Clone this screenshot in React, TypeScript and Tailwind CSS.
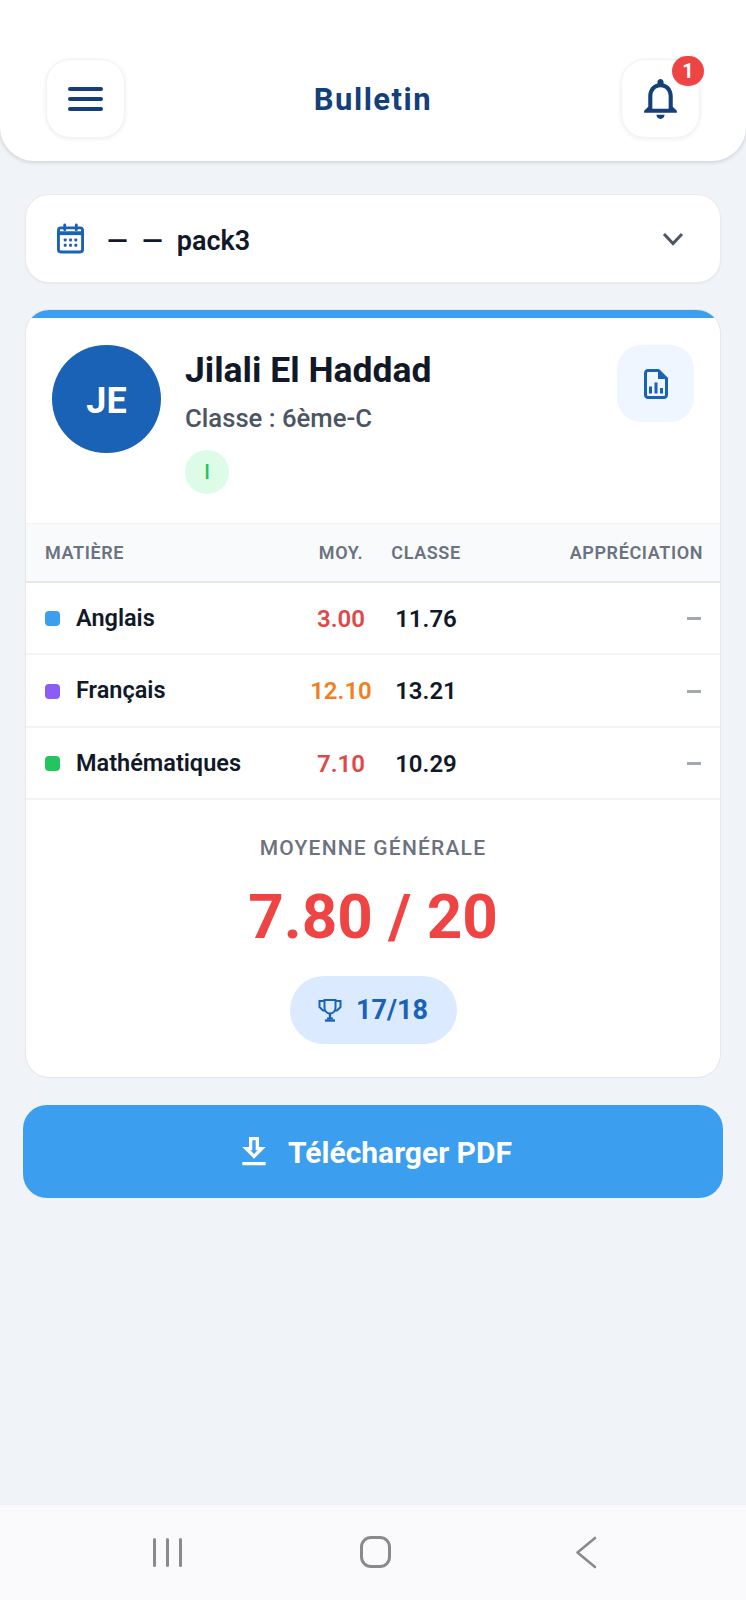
const subjects = [
  { name: "Anglais", dot: "bg-[#3b9eef]", moy: "3.00", moyColor: "text-[#e04848]", classe: "11.76", height: "h-[72px]" },
  { name: "Français", dot: "bg-[#8b5cf6]", moy: "12.10", moyColor: "text-[#f07f22]", classe: "13.21", height: "h-[73px]" },
  { name: "Mathématiques", dot: "bg-[#22c55e]", moy: "7.10", moyColor: "text-[#e04848]", classe: "10.29", height: "h-[72px]" },
];

const gridCols = "grid grid-cols-[265px_62px_108px_1fr] items-center pl-[19px] pr-[17px]";

function BellIcon() {
  return (
    <svg width="49" height="49" viewBox="0 0 24 24" fill="#143f7a">
      <path d="M12 22c1.1 0 2-.9 2-2h-4c0 1.1.9 2 2 2zm6-6v-5c0-3.07-1.63-5.64-4.5-6.32V4c0-.83-.67-1.5-1.5-1.5s-1.5.67-1.5 1.5v.68C7.64 5.36 6 7.92 6 11v5l-2 2v1h16v-1l-2-2zm-2 1H8v-6c0-2.48 1.51-4.5 4-4.5s4 2.02 4 4.5v6z" />
    </svg>
  );
}

function CalendarIcon() {
  return (
    <svg width="27" height="31" viewBox="0 0 28 31" fill="none">
      <rect x="1.5" y="4.5" width="25" height="25" rx="2.5" stroke="#1a62b5" strokeWidth="3" />
      <path d="M1.5 8h25v4h-25z" fill="#1a62b5" />
      <path d="M8 1.5v5M20 1.5v5" stroke="#1a62b5" strokeWidth="3" strokeLinecap="round" />
      <g fill="#1a62b5">
        <rect x="7" y="15.5" width="3" height="3" rx="0.8" />
        <rect x="12.5" y="15.5" width="3" height="3" rx="0.8" />
        <rect x="18" y="15.5" width="3" height="3" rx="0.8" />
        <rect x="7" y="21" width="3" height="3" rx="0.8" />
        <rect x="12.5" y="21" width="3" height="3" rx="0.8" />
        <rect x="18" y="21" width="3" height="3" rx="0.8" />
      </g>
    </svg>
  );
}

function ReportIcon() {
  return (
    <svg width="24" height="30" viewBox="0 0 24 30" fill="none">
      <path d="M4 1.5h10.5l8 8V26a2.5 2.5 0 0 1-2.5 2.5H4A2.5 2.5 0 0 1 1.5 26V4A2.5 2.5 0 0 1 4 1.5z" stroke="#1a62b5" strokeWidth="3" strokeLinejoin="round" />
      <path d="M14 2l8 8h-8z" fill="#1a62b5" />
      <path d="M6.5 17.5v7M12 13.5v11M17.5 19v5.5" stroke="#1a62b5" strokeWidth="3" />
    </svg>
  );
}

function TrophyIcon() {
  return (
    <svg width="24" height="24" viewBox="0 0 24 24" fill="none" stroke="#1a62b5" strokeWidth="2">
      <path d="M6.5 2h11v8a5.5 5.5 0 0 1-11 0z" />
      <path d="M6.5 3H1.5v6L5 12.5h2M17.5 3h5v6L19 12.5h-2" />
      <path d="M12 15.5v5" strokeWidth="2.4" />
      <path d="M7 22.5h10" strokeWidth="2.4" />
      <path d="M9 20.5h6" />
    </svg>
  );
}

function DownloadIcon() {
  return (
    <svg width="40" height="40" viewBox="0 0 24 24" fill="#fff">
      <path d="M19 9h-4V3H9v6H5l7 7 7-7zM11 5h2v6h1.17L12 13.17 9.83 11H11V5zm-6 13h14v2H5z" />
    </svg>
  );
}

export default function App() {
  return (
    <div className="min-h-[1600px] flex flex-col bg-[#f0f3f7] font-['Roboto',sans-serif] text-[#111827]">
      <header className="h-[161px] pt-[59px] pl-[46px] pr-[46px] flex items-start justify-between bg-white rounded-b-[34px] shadow-[0_1px_4px_rgba(15,23,42,0.18)]">
        <button className="w-[79px] h-[79px] flex items-center justify-center rounded-[24px] bg-white border border-[#f1f3f6] shadow-[0_1px_4px_rgba(15,23,42,0.08)]">
          <span className="w-[35px] flex flex-col gap-[6px]">
            <span className="h-[4px] bg-[#143f7a] rounded-full" />
            <span className="h-[4px] bg-[#143f7a] rounded-full" />
            <span className="h-[4px] bg-[#143f7a] rounded-full" />
          </span>
        </button>
        <h1 className="h-[82px] flex items-center text-[31px] font-bold tracking-[1.5px] text-[#143f7a]">Bulletin</h1>
        <button className="relative w-[79px] h-[79px] flex items-center justify-center rounded-[24px] bg-white border border-[#f1f3f6] shadow-[0_1px_4px_rgba(15,23,42,0.08)]">
          <BellIcon />
          <span className="absolute -top-[4px] -right-[5px] w-[32px] h-[30px] flex items-center justify-center rounded-full bg-[#ef4444] text-white text-[20px] font-bold">
            1
          </span>
        </button>
      </header>

      <main className="px-[25px] pt-[33px]">
        <div className="h-[89px] pl-[31px] pr-[36px] flex items-center justify-between bg-white rounded-[24px] border border-[#e8ebf0] shadow-[0_1px_2px_rgba(15,23,42,0.05)]">
          <div className="flex items-center gap-[23px]">
            <CalendarIcon />
            <span className="pt-[5px] text-[27px] font-semibold [word-spacing:7.5px]">— — pack3</span>
          </div>
          <svg width="22" height="14" viewBox="0 0 22 14" fill="none" stroke="#4b5563" strokeWidth="3">
            <path d="M2 2l9 9.5L20 2" />
          </svg>
        </div>

        <section className="mt-[26px] bg-white rounded-[24px] border border-[#e3e7ed] overflow-hidden">
          <div className="h-[8px] bg-[#3b9eef]" />
          <div className="h-[205px] pt-[27px] pl-[26px] pr-[26px] flex items-start">
            <div className="w-[109px] h-[108px] pt-[3px] flex items-center justify-center rounded-full bg-[#1a62b5] text-white text-[36px] font-bold">
              JE
            </div>
            <div className="ml-[24px] flex-1">
              <h2 className="mt-[2px] text-[35.5px] leading-[46px] font-bold">Jilali El Haddad</h2>
              <p className="mt-[9px] text-[25.7px] leading-[32px] font-medium text-[#4b5563]">Classe : 6ème-C</p>
              <span className="mt-[16px] w-[44px] h-[44px] flex items-center justify-center rounded-full bg-[#dcfce7] text-[20px] font-medium text-[#22c55e]">
                I
              </span>
            </div>
            <button className="w-[77px] h-[77px] flex items-center justify-center rounded-[24px] bg-[#eff6ff]">
              <ReportIcon />
            </button>
          </div>

          <div className={`${gridCols} h-[60px] bg-[#f8fafc] border-t border-[#f1f3f6] border-b-2 border-b-[#e5e7eb] text-[18px] font-semibold tracking-[0.6px] text-[#6b7280]`}>
            <span>MATIÈRE</span>
            <span className="text-center">MOY.</span>
            <span className="text-center">CLASSE</span>
            <span className="text-right">APPRÉCIATION</span>
          </div>

          {subjects.map((s) => (
            <div key={s.name} className={`${gridCols} ${s.height} pt-[1px] border-b-2 border-[#f3f4f6] text-[23.5px] font-semibold`}>
              <span className="flex items-center gap-[16px]">
                <span className={`w-[15px] h-[15px] rounded-[4px] ${s.dot}`} />
                {s.name}
              </span>
              <span className={`text-center text-[24px] ${s.moyColor}`}>{s.moy}</span>
              <span className="text-center text-[24px]">{s.classe}</span>
              <span className="flex justify-end">
                <span className="mr-[2px] w-[14px] h-[3px] bg-[#a3a8b0]" />
              </span>
            </div>
          ))}

          <div className="h-[277px] pt-[34px] flex flex-col items-center">
            <p className="text-[21px] leading-[28px] font-medium tracking-[1.2px] text-[#6b7280]">MOYENNE GÉNÉRALE</p>
            <p className="mt-[17px] text-[62px] leading-[76px] font-bold text-[#ef4444]">7.80 / 20</p>
            <div className="mt-[21px] w-[167px] h-[68px] flex items-center justify-center gap-[14px] rounded-full bg-[#dbeafe] text-[27px] font-bold text-[#1a62b5]">
              <TrophyIcon />
              17/18
            </div>
          </div>
        </section>

        <button className="-mx-[2px] mt-[27px] w-[calc(100%+4px)] h-[93px] flex items-center justify-center gap-[14px] rounded-[24px] bg-[#3b9eef] text-white text-[30px] font-bold">
          <DownloadIcon />
          <span className="pt-[2px]">Télécharger PDF</span>
        </button>
      </main>

      <nav className="mt-auto h-[95px] flex items-start bg-[#fafafc]">
        <div className="ml-[153px] mt-[33px] flex gap-[10px]">
          <span className="w-[3px] h-[29px] bg-[#8a8a8e] rounded-full" />
          <span className="w-[3px] h-[29px] bg-[#8a8a8e] rounded-full" />
          <span className="w-[3px] h-[29px] bg-[#8a8a8e] rounded-full" />
        </div>
        <span className="ml-[178px] mt-[31px] w-[31px] h-[32px] rounded-[11px] border-[3px] border-[#8a8a8e]" />
        <svg className="ml-[184px] mt-[31px]" width="22" height="33" viewBox="0 0 22 33" fill="none" stroke="#8a8a8e" strokeWidth="2.6" strokeLinecap="round" strokeLinejoin="round">
          <path d="M20 2L2.5 16.5 20 31" />
        </svg>
      </nav>
    </div>
  );
}
